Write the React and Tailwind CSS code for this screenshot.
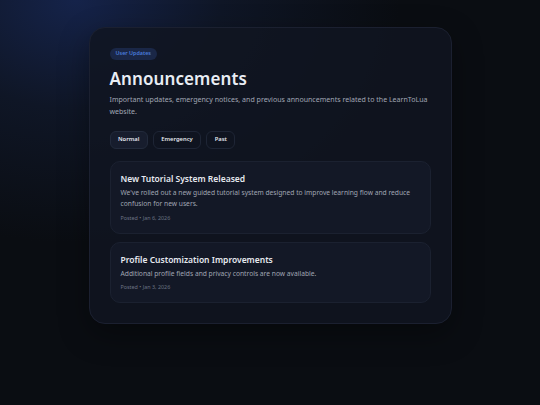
export default function App() {
  const tabs = ["Normal", "Emergency", "Past"];
  const posts = [
    {
      title: "New Tutorial System Released",
      body: "We've rolled out a new guided tutorial system designed to improve learning flow and reduce confusion for new users.",
      date: "Posted • Jan 6, 2026",
    },
    {
      title: "Profile Customization Improvements",
      body: "Additional profile fields and privacy controls are now available.",
      date: "Posted • Jan 3, 2026",
    },
  ];
  return (
    <div
      className="w-full h-[405px] overflow-hidden pt-[27px] bg-[radial-gradient(ellipse_60%_60%_at_14%_0%,#15234a_0%,#0f1626_45%,#0a0d12_100%)]"
      style={{ fontFamily: '"Noto Sans", "Open Sans", sans-serif' }}
    >
      <div className="mx-auto w-[363px] rounded-[16px] border border-[#1b2030] bg-[#111521]/85 px-[20px] pt-[20px] pb-[20px] shadow-[0_10px_30px_rgba(0,0,0,0.35)]">
        <div className="flex">
          <span className="inline-flex h-[12px] items-center rounded-full bg-[#1a2747] px-[6px] text-[5.4px] font-semibold leading-none text-[#4a7ddb]">
            User Updates
          </span>
        </div>
        <h1 className="mt-[7px] text-[17px] font-semibold leading-[24px] tracking-[0.1px] text-[#e9edf4]">
          Announcements
        </h1>
        <p className="mt-[3px] text-[7.05px] leading-[11.8px] text-[#a0a6b4]">
          Important updates, emergency notices, and previous announcements related to the LearnToLua website.
        </p>
        <div className="mt-[13px] flex gap-[5px]">
          {tabs.map((t, i) => (
            <button
              key={t}
              className={
                "h-[18px] rounded-[6px] border px-[7.5px] text-[5.8px] font-semibold leading-none text-[#e3e7ee] " +
                (i === 0 ? "border-[#222a3b] bg-[#171d2d]" : "border-[#1e2535] bg-transparent")
              }
            >
              {t}
            </button>
          ))}
        </div>
        <div className="mt-[12.5px] flex flex-col gap-[8px]">
          {posts.map((p) => (
            <div
              key={p.title}
              className="rounded-[10px] border border-[#1b2130] bg-[#131826] px-[10px] pt-[10px] pb-[10px]"
            >
              <div className="text-[8.5px] font-semibold leading-[13px] text-[#e6e9ef]">{p.title}</div>
              <div className="mt-[1.5px] text-[6.7px] leading-[11.7px] text-[#a0a6b3]">{p.body}</div>
              <div className="mt-[4px] text-[5.4px] leading-[9px] text-[#6b7383]">{p.date}</div>
            </div>
          ))}
        </div>
      </div>
    </div>
  );
}
